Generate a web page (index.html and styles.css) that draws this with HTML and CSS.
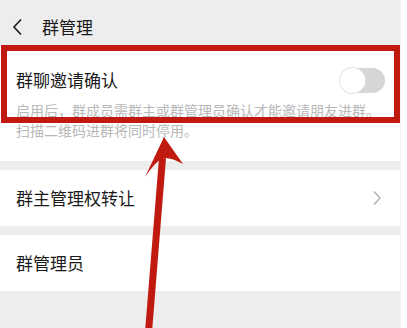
FILE: index.html
```html
<!DOCTYPE html>
<html lang="zh-CN">
<head>
<meta charset="utf-8">
<title>群管理</title>
<link rel="stylesheet" href="styles.css">
</head>
<body>
<div class="frame">
  <div class="screen">
    <header class="nav">
      <svg class="back" width="12" height="18" viewBox="0 0 12 18"><path d="M9 1.5 L2 9 L9 16.5" fill="none" stroke="#1a1a1a" stroke-width="1.6"/></svg>
      <span class="nav-title">群管理</span>
    </header>
    <section class="card card-invite">
      <div class="row-top">
        <span class="label">群聊邀请确认</span>
        <span class="switch"><span class="knob"></span></span>
      </div>
      <p class="desc">启用后，群成员需群主或群管理员确认才能邀请朋友进群。<br>扫描二维码进群将同时停用。</p>
    </section>
    <section class="card card-row">
      <span class="label">群主管理权转让</span>
      <svg class="chev" width="10" height="16" viewBox="0 0 10 16"><path d="M2 1.5 L8 8 L2 14.5" fill="none" stroke="#b2b2b2" stroke-width="1.5"/></svg>
    </section>
    <section class="card card-row">
      <span class="label">群管理员</span>
    </section>
  </div>
  <div class="edge"></div>
  <div class="highlight"></div>
  <svg class="arrow" width="407" height="328" viewBox="0 0 407 328">
    <line x1="162.5" y1="158" x2="148.5" y2="332" stroke="#c01a10" stroke-width="7"/>
    <path d="M164 137 L183 164 Q171 157 163 158 Q155 162 145 177 Z" fill="#c01a10"/>
  </svg>
</div>
</body>
</html>
```
FILE: styles.css
```css
* { box-sizing: border-box; }
html, body { margin: 0; padding: 0; background: #ffffff; }
body { font-family: "Noto Sans CJK SC", "Noto Sans", sans-serif; color: #1a1a1a; }
.frame { position: relative; display: flex; width: 407px; height: 328px; overflow: hidden; }
.screen { width: 400px; height: 328px; background: #ededed; display: flex; flex-direction: column; }
.edge { width: 7px; height: 328px; background: #ffffff; border-left: 1px solid #f2f2f2; }
.nav { height: 45px; display: flex; align-items: center; padding: 8px 0 0 12px; }
.back { display: block; margin-right: 18px; }
.nav-title { font-size: 17px; line-height: 24px; }
.card { background: #ffffff; }
.card-invite { padding: 23px 15px 21px 16px; margin-bottom: 9px; }
.row-top { display: flex; align-items: center; justify-content: space-between; height: 24px; margin-bottom: 8px; }
.label { font-size: 17px; line-height: 24px; }
.switch { position: relative; width: 45px; height: 25px; border-radius: 13px; background: #d6d6d6; }
.knob { position: absolute; left: 0; top: 0; width: 25px; height: 25px; border-radius: 50%; background: #ffffff; box-shadow: 0 0 0 1px #e2e2e2; }
.desc { margin: 0; font-size: 14px; line-height: 20px; color: #b8b8b8; white-space: nowrap; }
.card-row { height: 56px; display: flex; align-items: center; justify-content: space-between; padding: 0 18px 0 16px; margin-bottom: 9px; }
.chev { display: block; }
.highlight { position: absolute; left: 1px; top: 45px; width: 399px; height: 78px; border: 6px solid #c01a10; }
.arrow { position: absolute; left: 0; top: 0; }
```
